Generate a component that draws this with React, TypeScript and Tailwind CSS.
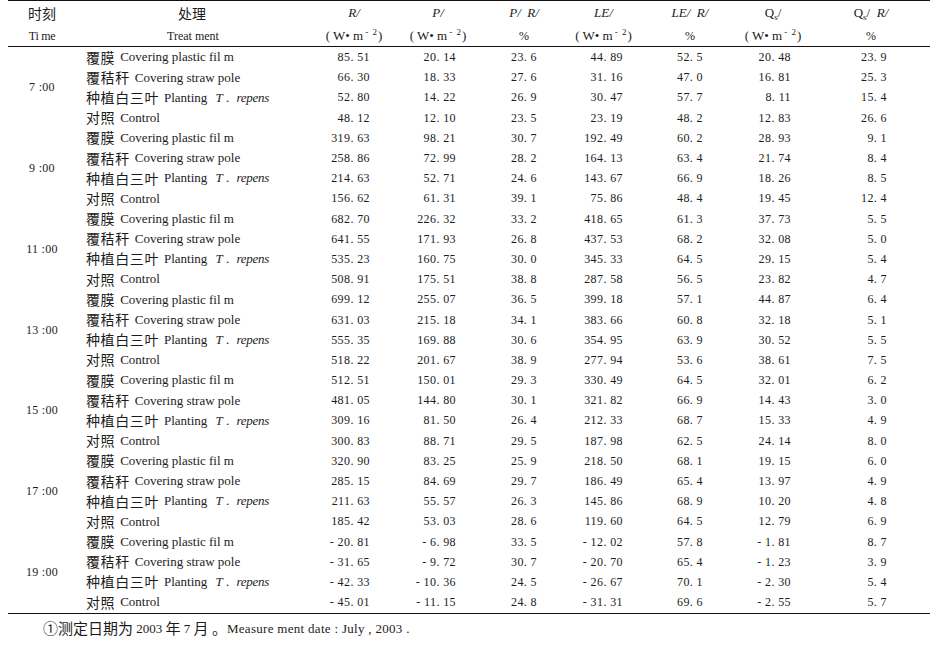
import React from 'react';

type Row = [string, string, string, string, string, string, string];

const cjk = { fontFamily: '"Noto Sans CJK SC", sans-serif' };

const treatments: { cn: string; en: React.ReactNode }[] = [
  { cn: '覆膜', en: 'Covering plastic fil m' },
  { cn: '覆秸秆', en: 'Covering straw pole' },
  {
    cn: '种植白三叶',
    en: (
      <>
        Planting <i className="ml-[5px]">T</i> . <i className="ml-[4px] tracking-[-0.3px]">repens</i>
      </>
    ),
  },
  { cn: '对照', en: 'Control' },
];

const groups: { time: string; rows: Row[] }[] = [
  {
    time: '7 :00',
    rows: [
      ['85.51', '20.14', '23.6', '44.89', '52.5', '20.48', '23.9'],
      ['66.30', '18.33', '27.6', '31.16', '47.0', '16.81', '25.3'],
      ['52.80', '14.22', '26.9', '30.47', '57.7', '8.11', '15.4'],
      ['48.12', '12.10', '23.5', '23.19', '48.2', '12.83', '26.6'],
    ],
  },
  {
    time: '9 :00',
    rows: [
      ['319.63', '98.21', '30.7', '192.49', '60.2', '28.93', '9.1'],
      ['258.86', '72.99', '28.2', '164.13', '63.4', '21.74', '8.4'],
      ['214.63', '52.71', '24.6', '143.67', '66.9', '18.26', '8.5'],
      ['156.62', '61.31', '39.1', '75.86', '48.4', '19.45', '12.4'],
    ],
  },
  {
    time: '11 :00',
    rows: [
      ['682.70', '226.32', '33.2', '418.65', '61.3', '37.73', '5.5'],
      ['641.55', '171.93', '26.8', '437.53', '68.2', '32.08', '5.0'],
      ['535.23', '160.75', '30.0', '345.33', '64.5', '29.15', '5.4'],
      ['508.91', '175.51', '38.8', '287.58', '56.5', '23.82', '4.7'],
    ],
  },
  {
    time: '13 :00',
    rows: [
      ['699.12', '255.07', '36.5', '399.18', '57.1', '44.87', '6.4'],
      ['631.03', '215.18', '34.1', '383.66', '60.8', '32.18', '5.1'],
      ['555.35', '169.88', '30.6', '354.95', '63.9', '30.52', '5.5'],
      ['518.22', '201.67', '38.9', '277.94', '53.6', '38.61', '7.5'],
    ],
  },
  {
    time: '15 :00',
    rows: [
      ['512.51', '150.01', '29.3', '330.49', '64.5', '32.01', '6.2'],
      ['481.05', '144.80', '30.1', '321.82', '66.9', '14.43', '3.0'],
      ['309.16', '81.50', '26.4', '212.33', '68.7', '15.33', '4.9'],
      ['300.83', '88.71', '29.5', '187.98', '62.5', '24.14', '8.0'],
    ],
  },
  {
    time: '17 :00',
    rows: [
      ['320.90', '83.25', '25.9', '218.50', '68.1', '19.15', '6.0'],
      ['285.15', '84.69', '29.7', '186.49', '65.4', '13.97', '4.9'],
      ['211.63', '55.57', '26.3', '145.86', '68.9', '10.20', '4.8'],
      ['185.42', '53.03', '28.6', '119.60', '64.5', '12.79', '6.9'],
    ],
  },
  {
    time: '19 :00',
    rows: [
      ['-20.81', '-6.98', '33.5', '-12.02', '57.8', '-1.81', '8.7'],
      ['-31.65', '-9.72', '30.7', '-20.70', '65.4', '-1.23', '3.9'],
      ['-42.33', '-10.36', '24.5', '-26.67', '70.1', '-2.30', '5.4'],
      ['-45.01', '-11.15', '24.8', '-31.31', '69.6', '-2.55', '5.7'],
    ],
  },
];

// right padding per numeric column so values end where the reference has them
const valuePad = ['pr-[30px]', 'pr-[20px]', 'pr-[25px]', 'pr-[22px]', 'pr-[32px]', 'pr-[24px]', 'pr-[43px]'];

const fmt = (v: string) => v.replace('-', '- ').replace('.', '. ');

const cols = 'grid grid-cols-[68px_228px_96px_76px_86px_83px_90px_80px_115px]';

const Unit = () => (
  <span className="text-[13px]">
    ( W• m<sup className="text-[9px] ml-[2px] tracking-[1px]">- 2</sup>)
  </span>
);

export default function App() {
  return (
    <div
      className="w-[936px] h-[645px] bg-white text-[#1c1c1c] text-[12px] pl-[8px] pr-[6px]"
      style={{ fontFamily: '"Liberation Serif", "Noto Sans CJK SC", serif' }}
    >
      <div className="border-t border-[#111]">
        <div className={`${cols} border-b border-[#111]`}>
          <div className="h-[24px] flex items-center justify-center text-[14px]" style={cjk}>时刻</div>
          <div className="h-[24px] flex items-center justify-center pl-[4px] text-[14px]" style={cjk}>处理</div>
          <div className="h-[24px] flex items-center justify-center pl-[4px] text-[13px]"><i>R/</i></div>
          <div className="h-[24px] flex items-center justify-center text-[13px]"><i>P/</i></div>
          <div className="h-[24px] flex items-center justify-center pl-[10px] text-[13px]"><i>P/&nbsp;&nbsp;R/</i></div>
          <div className="h-[24px] flex items-center justify-center text-[13px]"><i>LE/</i></div>
          <div className="h-[24px] flex items-center justify-center text-[13px]"><i>LE/&nbsp;&nbsp;R/</i></div>
          <div className="h-[24px] flex items-center justify-center pr-[4px] text-[13px]">
            <span>Q<sub className="text-[9px]">s</sub>/</span>
          </div>
          <div className="h-[24px] flex items-center justify-center pr-[3px] text-[13px]">
            <span>Q<sub className="text-[9px]">s</sub>/&nbsp;&nbsp;<i>R/</i></span>
          </div>

          <div className="h-[21px] flex items-center justify-center tracking-[-0.3px]">Ti me</div>
          <div className="h-[21px] flex items-center justify-center pl-[6px]">Treat ment</div>
          <div className="h-[21px] flex items-center justify-center pl-[4px] whitespace-nowrap"><Unit /></div>
          <div className="h-[21px] flex items-center justify-center whitespace-nowrap"><Unit /></div>
          <div className="h-[21px] flex items-center justify-center pl-[10px]">%</div>
          <div className="h-[21px] flex items-center justify-center whitespace-nowrap"><Unit /></div>
          <div className="h-[21px] flex items-center justify-center">%</div>
          <div className="h-[21px] flex items-center justify-center pr-[4px] whitespace-nowrap"><Unit /></div>
          <div className="h-[21px] flex items-center justify-center pr-[3px]">%</div>
        </div>

        <div className="border-b border-[#111] pb-[1px]">
          {groups.map((g) => (
            <div key={g.time} className={cols}>
              <div className="row-span-4 flex items-center justify-center tracking-[0.3px]">{g.time}</div>
              {g.rows.map((r, i) => (
                <React.Fragment key={i}>
                  <div className="h-[20.2px] flex items-center pl-[10px] whitespace-nowrap text-[13px]">
                    <span className="text-[14px] tracking-[0.6px] mr-[5px]" style={cjk}>
                      {treatments[i].cn}
                    </span>
                    <span>{treatments[i].en}</span>
                  </div>
                  {r.map((v, j) => (
                    <div
                      key={j}
                      className={`h-[20.2px] flex items-center justify-end whitespace-pre tracking-[0.4px] ${valuePad[j]}`}
                    >
                      {fmt(v)}
                    </div>
                  ))}
                </React.Fragment>
              ))}
            </div>
          ))}
        </div>
      </div>

      <div className="pl-[35px] pt-[3px] flex items-center whitespace-pre text-[13px]">
        <span className="text-[15px]" style={cjk}>①测定日期为</span>
        <span> 2003 </span>
        <span className="text-[15px]" style={cjk}>年</span>
        <span> 7 </span>
        <span className="text-[15px]" style={cjk}>月 。</span>
        <span className="tracking-[0.3px]">Measure ment date : July , 2003 .</span>
      </div>
    </div>
  );
}
